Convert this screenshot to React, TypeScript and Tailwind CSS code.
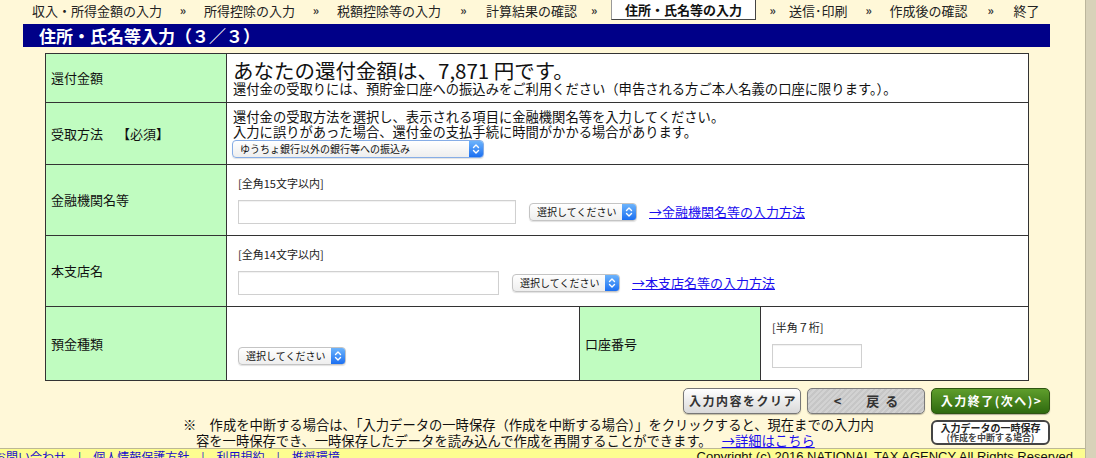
import React from "react";

const jp = "font-['Noto_Sans_CJK_JP',sans-serif]";

const steps = [
  { label: "収入・所得金額の入力", sep: "w-[42px]" },
  { label: "所得控除の入力", sep: "w-[42px]" },
  { label: "税額控除等の入力", sep: "w-[45px]" },
  { label: "計算結果の確認", sep: "w-[34px]" },
  { label: "住所・氏名等の入力", sep: "w-[33px]", active: true },
  { label: "送信･印刷", sep: "w-[42px]" },
  { label: "作成後の確認", sep: "w-[46px]" },
  { label: "終了", sep: "" },
];

function Chevrons() {
  return (
    <svg width="8" height="12" viewBox="0 0 8 12" fill="none" stroke="white" strokeWidth="1.4" strokeLinecap="round" strokeLinejoin="round">
      <path d="M1.5 4.6 4 2.1l2.5 2.5" />
      <path d="M1.5 7.4 4 9.9l2.5-2.5" />
    </svg>
  );
}

function MacSelect({ text, className }: { text: string; className: string }) {
  return (
    <div
      className={`flex h-[18px] shrink-0 items-stretch overflow-hidden rounded-[4px] border bg-linear-to-b from-white to-[#eeeeee] shadow-[0_1px_1px_rgba(0,0,0,0.12)] ${className}`}
    >
      <span className="flex flex-1 items-center overflow-hidden whitespace-nowrap pl-[7px] text-[10px] leading-none text-[#111]">
        {text}
      </span>
      <span className="flex w-[14px] shrink-0 items-center justify-center bg-linear-to-b from-[#6cb3fb] to-[#1b6ff1]">
        <Chevrons />
      </span>
    </div>
  );
}

function TextBox({ className }: { className: string }) {
  return (
    <div className={`h-[24px] shrink-0 border border-[#d0d0d0] bg-white shadow-[inset_0_1px_1px_rgba(0,0,0,0.06)] ${className}`} />
  );
}

function Field({ hint, children }: { hint: string; children: React.ReactNode }) {
  return (
    <div className="flex flex-col">
      <div className="h-[14px] whitespace-nowrap text-[11px] leading-[14px] text-[#222]">{hint}</div>
      <div className="mt-[10px] flex h-[24px] items-center">{children}</div>
    </div>
  );
}

export default function App() {
  return (
    <div className={`flex h-[458px] w-[1096px] overflow-hidden bg-[#fff8d8] text-[#111] ${jp}`}>
      <div className="w-[1085px] shrink-0">
        {/* STEP NAV */}
        <div className="flex h-[20px] items-center pl-[32px] text-[13px] leading-none text-[#222]">
          {steps.map((s) => (
            <React.Fragment key={s.label}>
              {s.active ? (
                <span className="flex h-[20px] items-center border border-t-0 border-[#999] border-r-[#444] border-b-[#444] bg-white px-[13px] font-bold text-[#111]">
                  {s.label}
                </span>
              ) : (
                <span className="whitespace-nowrap">{s.label}</span>
              )}
              {s.sep && (
                <span className={`flex justify-center text-[12px] font-bold text-[#333] ${s.sep}`}>»</span>
              )}
            </React.Fragment>
          ))}
        </div>

        {/* TITLE BAR */}
        <div className="ml-[23px] mt-[4px] flex h-[23px] w-[1027px] items-center bg-[#000088] pl-[16px] text-[17px] font-bold leading-none text-white">
          住所・氏名等入力（３／３）
        </div>

        {/* FORM TABLE */}
        <table className="ml-[45px] mt-[6px] w-[984px] table-fixed border-collapse border border-[#333] text-[13px] leading-[16px]">
          <colgroup>
            <col className="w-[181px]" />
            <col className="w-[353px]" />
            <col className="w-[181px]" />
            <col />
          </colgroup>
          <tbody>
            <tr className="h-[49px]">
              <td className="border border-[#333] bg-[#c0fcc0] pl-[5px]">還付金額</td>
              <td colSpan={3} className="border border-[#333] bg-white pl-[6px]">
                <div className="whitespace-nowrap text-[20.5px] leading-[22px]">あなたの還付金額は、7,871 円です。</div>
                <div className="whitespace-nowrap text-[13.3px] leading-[16px]">
                  還付金の受取りには、預貯金口座への振込みをご利用ください（申告される方ご本人名義の口座に限ります。）。
                </div>
              </td>
            </tr>
            <tr className="h-[62px]">
              <td className="border border-[#333] bg-[#c0fcc0] pl-[5px] whitespace-nowrap">
                受取方法<span className="ml-[14px]">【必須】</span>
              </td>
              <td colSpan={3} className="border border-[#333] bg-white pl-[6px]">
                <div className="whitespace-nowrap text-[13.3px] leading-[15px]">
                  還付金の受取方法を選択し、表示される項目に金融機関名等を入力してください。
                </div>
                <div className="whitespace-nowrap text-[13.3px] leading-[15px]">
                  入力に誤りがあった場合、還付金の支払手続に時間がかかる場合があります。
                </div>
                <div className="mt-[1px] -ml-[1px]">
                  <MacSelect text="ゆうちょ銀行以外の銀行等への振込み" className="w-[252px] border-[#86ade6]" />
                </div>
              </td>
            </tr>
            <tr className="h-[71px]">
              <td className="border border-[#333] bg-[#c0fcc0] pl-[5px]">金融機関名等</td>
              <td colSpan={3} className="border border-[#333] bg-white pl-[11px]">
                <Field hint="[全角15文字以内]">
                  <TextBox className="w-[278px]" />
                  <MacSelect text="選択してください" className="ml-[13px] w-[108px] border-[#c4c4c4]" />
                  <a className="ml-[12px] whitespace-nowrap text-[13px] text-[#1a0dee] underline">→金融機関名等の入力方法</a>
                </Field>
              </td>
            </tr>
            <tr className="h-[71px]">
              <td className="border border-[#333] bg-[#c0fcc0] pl-[5px]">本支店名</td>
              <td colSpan={3} className="border border-[#333] bg-white pl-[11px]">
                <Field hint="[全角14文字以内]">
                  <TextBox className="w-[261px]" />
                  <MacSelect text="選択してください" className="ml-[13px] w-[108px] border-[#c4c4c4]" />
                  <a className="ml-[12px] whitespace-nowrap text-[13px] text-[#1a0dee] underline">→本支店名等の入力方法</a>
                </Field>
              </td>
            </tr>
            <tr className="h-[74px]">
              <td className="border border-[#333] bg-[#c0fcc0] pl-[5px]">預金種類</td>
              <td className="border border-[#333] bg-white pl-[11px]">
                <Field hint="">
                  <MacSelect text="選択してください" className="w-[108px] border-[#c4c4c4]" />
                </Field>
              </td>
              <td className="border border-[#333] bg-[#c0fcc0] pl-[5px]">口座番号</td>
              <td className="border border-[#333] bg-white pl-[11px]">
                <Field hint="[半角７桁]">
                  <TextBox className="w-[90px]" />
                </Field>
              </td>
            </tr>
          </tbody>
        </table>

        {/* BUTTONS */}
        <div className="mt-[7px] flex justify-end gap-[6px] pr-[35px]">
          <button className="flex h-[26px] w-[118px] items-center justify-center whitespace-nowrap rounded-[5px] border border-[#777] bg-linear-to-b from-white to-[#d9d9d9] pl-[2px] text-[12px] font-bold tracking-[1.5px] text-[#333] shadow-[0_1px_1px_rgba(0,0,0,0.25)]">
            入力内容をクリア
          </button>
          <button className="flex h-[26px] w-[118px] items-center justify-center whitespace-nowrap rounded-[5px] border border-[#7a7a7a] bg-[image:repeating-linear-gradient(135deg,#d2d2d2_0px,#d2d2d2_2px,#c6c6c6_2px,#c6c6c6_4px)] pl-[6px] text-[13px] font-bold tracking-[6px] text-[#333] shadow-[0_1px_1px_rgba(0,0,0,0.25)]">
            &lt;　戻る
          </button>
          <button className="flex h-[26px] w-[119px] items-center justify-center whitespace-nowrap rounded-[5px] border border-[#2f5512] bg-linear-to-b from-[#5f9e2c] to-[#2f6a0e] pl-[2px] text-[12px] font-bold tracking-[1.5px] text-white shadow-[0_1px_1px_rgba(0,0,0,0.3)]">
            入力終了(次へ)&gt;
          </button>
        </div>

        <div className="mt-[3px] flex items-start justify-between pr-[35px]">
          <div className="ml-[183px] text-[13.3px] leading-[16px]">
            <div className="whitespace-nowrap">
              ※　作成を中断する場合は、「入力データの一時保存（作成を中断する場合）」をクリックすると、現在までの入力内
            </div>
            <div className="ml-[13px] whitespace-nowrap">
              容を一時保存でき、一時保存したデータを読み込んで作成を再開することができます。
              <a className="ml-[10px] text-[#1a0dee] underline">→詳細はこちら</a>
            </div>
          </div>
          <button className="mt-[3px] flex h-[25px] w-[119px] flex-col items-center justify-center rounded-[6px] border-2 border-[#444] bg-white font-bold text-[#222]">
            <span className="whitespace-nowrap text-[10px] leading-[10px]">入力データの一時保存</span>
            <span className="whitespace-nowrap text-[9px] leading-[10px] text-[#444]">(作成を中断する場合)</span>
          </button>
        </div>

        {/* FOOTER */}
        <div className="mt-[-1px] flex h-[24px] items-start justify-between border-t border-[#bdb894] bg-[#fdfd90] pr-[12px] text-[12px] leading-[16px]">
          <div className="-ml-[6px] flex items-center gap-[12px] whitespace-nowrap text-[#1a0dcc]">
            <span>お問い合わせ</span>
            <span>|</span>
            <span>個人情報保護方針</span>
            <span>|</span>
            <span>利用規約</span>
            <span>|</span>
            <span>推奨環境</span>
          </div>
          <div className="whitespace-nowrap font-['Liberation_Sans',sans-serif] text-[13px] text-[#111]">
            Copyright (c) 2016 NATIONAL TAX AGENCY All Rights Reserved
          </div>
        </div>
      </div>
      <div className="flex-1 border-l border-[#bcb69c] bg-[#d8d2b9]" />
    </div>
  );
}
